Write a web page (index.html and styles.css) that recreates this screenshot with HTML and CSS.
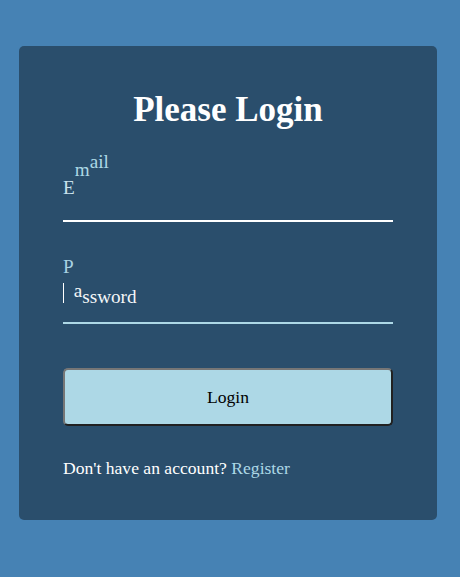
FILE: index.html
```html
<!DOCTYPE html>
<html lang="en">
<head>
<meta charset="utf-8">
<title>Login</title>
<link rel="stylesheet" href="styles.css">
</head>
<body>
<div class="card">
  <h1 class="title">Please Login</h1>
  <form class="form">
    <div class="form-control">
      <input type="text" class="field" aria-label="Email">
      <label class="label"><span class="ch up7 tint">E</span><span class="ch up25">m</span><span class="ch up33">a</span><span class="ch up33">i</span><span class="ch up33">l</span></label>
    </div>
    <div class="form-control focused">
      <input type="password" class="field field-focus" aria-label="Password">
      <span class="caret"></span>
      <label class="label"><span class="ch up30 blue">P</span><span class="ch up6 white">a</span><span class="ch white">s</span><span class="ch white">s</span><span class="ch white">w</span><span class="ch white">o</span><span class="ch white">r</span><span class="ch white">d</span></label>
    </div>
    <button type="button" class="btn">Login</button>
    <p class="text">Don't have an account? <a class="link" href="#">Register</a></p>
  </form>
</div>
</body>
</html>
```

FILE: styles.css
```css
html, body {
  margin: 0;
  padding: 0;
}
body {
  background: #4682b4;
  font-family: "Liberation Serif", "Times New Roman", serif;
  color: #fff;
  height: 577px;
  overflow: hidden;
}
.card {
  box-sizing: border-box;
  width: 418px;
  margin: 46px 0 0 19px;
  padding: 44px 44px 42px;
  background: rgba(0, 0, 0, 0.4);
  border-radius: 5px;
}
.title {
  margin: 0;
  font-size: 35px;
  line-height: 39px;
  font-weight: bold;
  text-align: center;
  color: #fff;
}
.form {
  display: flex;
  flex-direction: column;
  margin-top: 40px;
}
.form-control {
  position: relative;
  margin-bottom: 49px;
}
.form-control.focused {
  margin-bottom: 44px;
}
.field {
  display: block;
  box-sizing: border-box;
  width: 100%;
  height: 53px;
  margin: 0;
  padding: 15px 0;
  background: transparent;
  border: 0;
  border-bottom: 2px solid #fff;
  outline: none;
  font-family: "Liberation Serif", serif;
  font-size: 19.2px;
  line-height: 21px;
  color: #fff;
}
.field-focus {
  border-bottom-color: #add8e6;
}
.caret {
  position: absolute;
  left: 0;
  top: 12px;
  width: 1px;
  height: 20px;
  background: #fff;
}
.label {
  position: absolute;
  top: 15px;
  left: 0;
  font-size: 19.2px;
  line-height: 21px;
  pointer-events: none;
  white-space: nowrap;
}
.ch {
  display: inline-block;
  min-width: 5px;
  color: #add8e6;
}
.tint { color: #c9e2ec; }
.blue { color: #a9d2e3; }
.white { color: #f4f6f8; }
.up6 { transform: translateY(-6px); }
.up7 { transform: translateY(-7px); }
.up25 { transform: translateY(-25px); }
.up30 { transform: translateY(-30px); }
.up33 { transform: translateY(-33px); }
.btn {
  display: block;
  width: 100%;
  height: 58px;
  margin: 0;
  padding: 0;
  background: #add8e6;
  border: 2px outset #767676;
  border-radius: 5px;
  font-family: "Liberation Serif", serif;
  font-size: 17.6px;
  color: #000;
}
.text {
  margin: 32px 0 0;
  font-size: 17.6px;
  line-height: 20px;
  color: #fff;
}
.link {
  color: #add8e6;
  text-decoration: none;
}
```
